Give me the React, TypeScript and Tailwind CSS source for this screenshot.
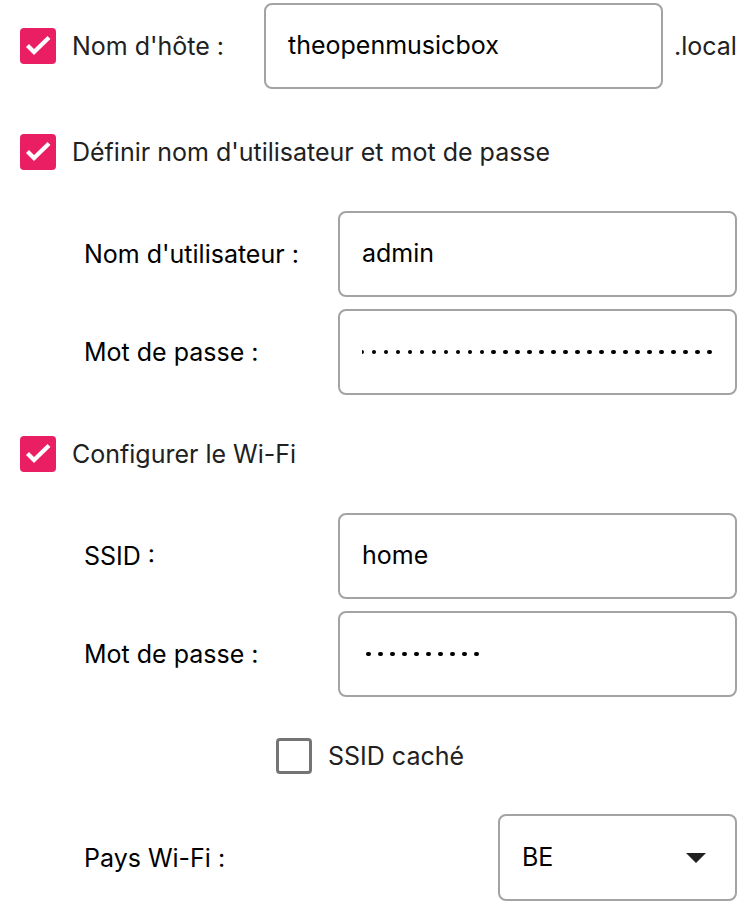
import { useState } from 'react'

function Check({ checked }: { checked: boolean }) {
  if (!checked) {
    return <span className="block h-9 w-9 shrink-0 rounded-[4px] border-[3px] border-[#757575] bg-white" />
  }
  return (
    <span className="block h-9 w-9 shrink-0 rounded-[4px] bg-[#e91e63]">
      <svg width="36" height="36" viewBox="0 0 36 36" fill="none">
        <path d="M7.5 17.5l6.5 6.5L29 9.5" stroke="#fff" strokeWidth="4.2" />
      </svg>
    </span>
  )
}

// password mask: small round dots, 12px apart
function Dots({ count }: { count: number }) {
  return (
    <span className="flex shrink-0 items-center gap-[7.2px]">
      {Array.from({ length: count }).map((_, i) => (
        <span key={i} className="block h-[4.8px] w-[4.8px] rounded-full bg-black" />
      ))}
    </span>
  )
}

function Field({ label, children }: { label: string; children: React.ReactNode }) {
  return (
    <div className="flex items-center pl-[84px]">
      <div className="w-[254px] text-[25px] leading-9 text-black">{label}</div>
      {children}
    </div>
  )
}

const box = 'flex h-[86px] w-[399px] items-center rounded-lg border-2 border-[#a3a3a3] bg-white px-[22px] text-[25px] text-black'

export default function App() {
  const [hidden] = useState(false)

  return (
    <div className="min-h-[922px] w-[752px] bg-white font-['Inter','Noto_Sans',sans-serif] text-[#212121]">
      {/* Hostname */}
      <div className="flex items-center pl-5 pt-[3px]">
        <Check checked />
        <span className="ml-4 w-[192px] text-[25px] leading-9">Nom d'hôte :</span>
        <div className={box}>theopenmusicbox</div>
        <span className="ml-[11px] text-[25px] leading-9">.local</span>
      </div>

      {/* User */}
      <div className="mt-[45px] flex items-center pl-5">
        <Check checked />
        <span className="ml-4 text-[25px] leading-9">Définir nom d'utilisateur et mot de passe</span>
      </div>

      <div className="mt-[41px] flex flex-col gap-3">
        <Field label="Nom d'utilisateur :">
          <div className={box}>admin</div>
        </Field>
        <Field label="Mot de passe :">
          <div className={`${box} pr-[23px]`}>
            <div className="flex flex-1 justify-end overflow-hidden">
              <Dots count={31} />
            </div>
          </div>
        </Field>
      </div>

      {/* Wi-Fi */}
      <div className="mt-[41px] flex items-center pl-5">
        <Check checked />
        <span className="ml-4 text-[25px] leading-9">Configurer le Wi-Fi</span>
      </div>

      <div className="mt-[41px] flex flex-col gap-3">
        <Field label="SSID :">
          <div className={box}>home</div>
        </Field>
        <Field label="Mot de passe :">
          <div className={box}>
            <span className="ml-[4px]">
              <Dots count={10} />
            </span>
          </div>
        </Field>
      </div>

      <div className="mt-[41px] flex items-center pl-[276px]">
        <Check checked={hidden} />
        <span className="ml-4 text-[25px] leading-9">SSID caché</span>
      </div>

      <div className="mt-10 flex items-center pl-[84px]">
        <div className="w-[414px] text-[25px] leading-9 text-black">Pays Wi-Fi :</div>
        <div className="flex h-[87px] w-[239px] items-center justify-between rounded-lg border-2 border-[#a3a3a3] bg-white pl-[22px] pr-[29px] text-[25px] text-black">
          <span>BE</span>
          <svg width="20" height="10" viewBox="0 0 20 10">
            <path d="M0 0h20L10 10z" fill="#212121" />
          </svg>
        </div>
      </div>
    </div>
  )
}
